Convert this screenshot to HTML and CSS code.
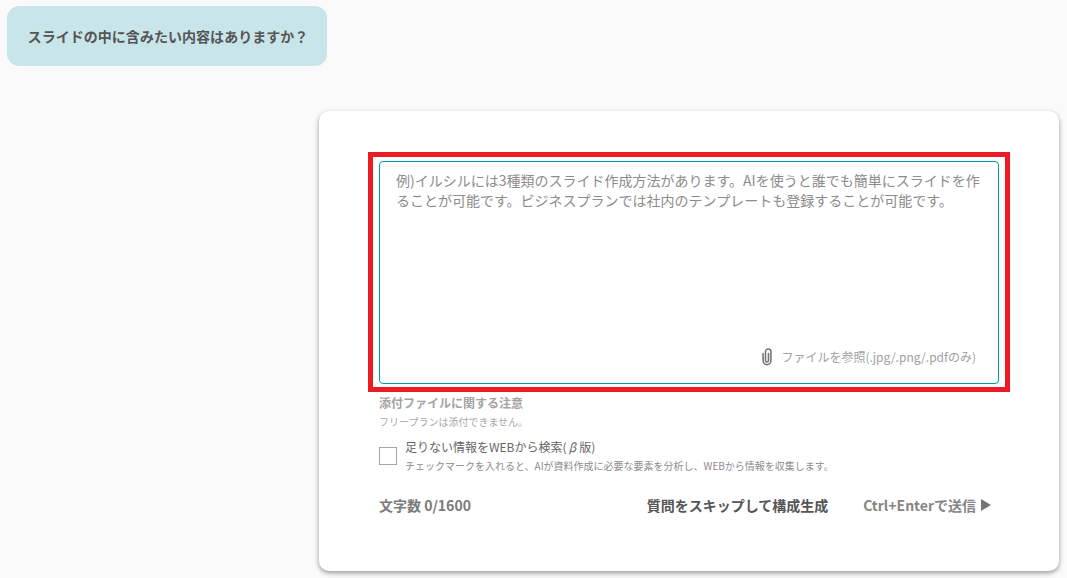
FILE: index.html
```html
<!DOCTYPE html>
<html lang="ja">
<head>
<meta charset="utf-8">
<title>スライド</title>
<link rel="stylesheet" href="styles.css">
</head>
<body>
<main class="page">
  <div class="bubble">スライドの中に含みたい内容はありますか？</div>
  <section class="card">
    <div class="input-box">
      <div class="placeholder">例)イルシルには3種類のスライド作成方法があります。AIを使うと誰でも簡単にスライドを作ることが可能です。ビジネスプランでは社内のテンプレートも登録することが可能です。</div>
      <div class="attach">
        <svg class="clip" width="14" height="18" viewBox="0 0 14 18" fill="none" stroke="#767676" stroke-width="1.6" stroke-linecap="round"><path d="M8.5 5.5v7a1.5 1.5 0 0 1-3 0V3.7a2.7 2.7 0 0 1 5.4 0v9a3.9 3.9 0 0 1-7.8 0V5.5"/></svg>
        <span>ファイルを参照(.jpg/.png/.pdfのみ)</span>
      </div>
      <div class="highlight"></div>
    </div>
    <div class="note-title">添付ファイルに関する注意</div>
    <div class="note-text">フリープランは添付できません。</div>
    <div class="check-row">
      <span class="checkbox"></span>
      <div>
        <div class="check-label">足りない情報をWEBから検索(<span class="beta">β</span>版)</div>
        <div class="check-help">チェックマークを入れると、AIが資料作成に必要な要素を分析し、WEBから情報を収集します。</div>
      </div>
    </div>
    <div class="footer">
      <span class="count">文字数 0/1600</span>
      <div class="actions">
        <span class="skip">質問をスキップして構成生成</span>
        <span class="send">Ctrl+Enterで送信<svg class="arrow" width="10" height="12" viewBox="0 0 10 12"><path d="M0 0l10 6-10 6z" fill="#757575"/></svg></span>
      </div>
    </div>
  </section>
</main>
</body>
</html>
```
FILE: styles.css
```css
* { box-sizing: border-box; }
html, body { margin: 0; height: 100%; }
body {
  background: #fafafa;
  font-family: "Noto Sans CJK JP", "Noto Sans", sans-serif;
  overflow: hidden;
}
.page {
  display: flex;
  flex-direction: column;
  align-items: flex-start;
  padding: 6px 8px 0 7px;
}
.bubble {
  width: 320px;
  height: 60px;
  padding-left: 2px;
  display: flex;
  align-items: center;
  justify-content: center;
  background: #c8e6ea;
  border-radius: 12px;
  color: #555;
  font-size: 14px;
  font-weight: 700;
  letter-spacing: .04px;
  white-space: nowrap;
}
.card {
  width: 740px;
  height: 460px;
  margin: 45px 0 0 312px;
  padding: 50px 60px 0;
  background: #fff;
  border-radius: 10px;
  box-shadow: 0 2px 5px rgba(0, 0, 0, .4);
}
.input-box {
  position: relative;
  width: 620px;
  height: 223px;
  padding: 8px 16px;
  border: 1px solid #0097a7;
  border-radius: 4px;
}
.placeholder {
  color: #8c8c8c;
  font-size: 14px;
  line-height: 20px;
  width: 590px;
}
.attach {
  position: absolute;
  right: 22px;
  bottom: 17px;
  display: flex;
  align-items: center;
  gap: 7px;
  color: #a0a0a0;
  font-size: 12px;
  line-height: 18px;
}
.highlight {
  position: absolute;
  left: -12px;
  right: -12px;
  top: -10px;
  bottom: -9px;
  border: 5px solid #ed1c24;
  pointer-events: none;
}
.note-title {
  margin-top: 10px;
  color: #a3a3a3;
  font-size: 12px;
  font-weight: 700;
  line-height: 17px;
}
.note-text {
  margin-top: 3px;
  color: #a8a8a8;
  font-size: 10px;
  line-height: 15px;
}
.check-row {
  display: flex;
  align-items: center;
  gap: 8px;
  margin-top: 9px;
}
.checkbox {
  width: 18px;
  height: 18px;
  border: 1px solid #a6a6a6;
  background: #fff;
  flex: none;
}
.check-label {
  color: #666;
  font-size: 12px;
  line-height: 18px;
}
.beta {
  display: inline-block;
  padding: 0 3px 0 2px;
  font-style: italic;
}
.check-help {
  margin-top: 2px;
  color: #8c8c8c;
  font-size: 10px;
  line-height: 15px;
}
.footer {
  display: flex;
  justify-content: space-between;
  align-items: center;
  margin-top: 21px;
  padding-right: 8px;
  height: 22px;
}
.count {
  color: #7a7a7a;
  font-size: 14px;
  font-weight: 700;
}
.actions {
  display: flex;
  align-items: center;
  gap: 35px;
}
.skip {
  color: #555;
  font-size: 14px;
  font-weight: 700;
}
.send {
  display: flex;
  align-items: center;
  gap: 5px;
  color: #858585;
  font-size: 14px;
  font-weight: 700;
}
```
